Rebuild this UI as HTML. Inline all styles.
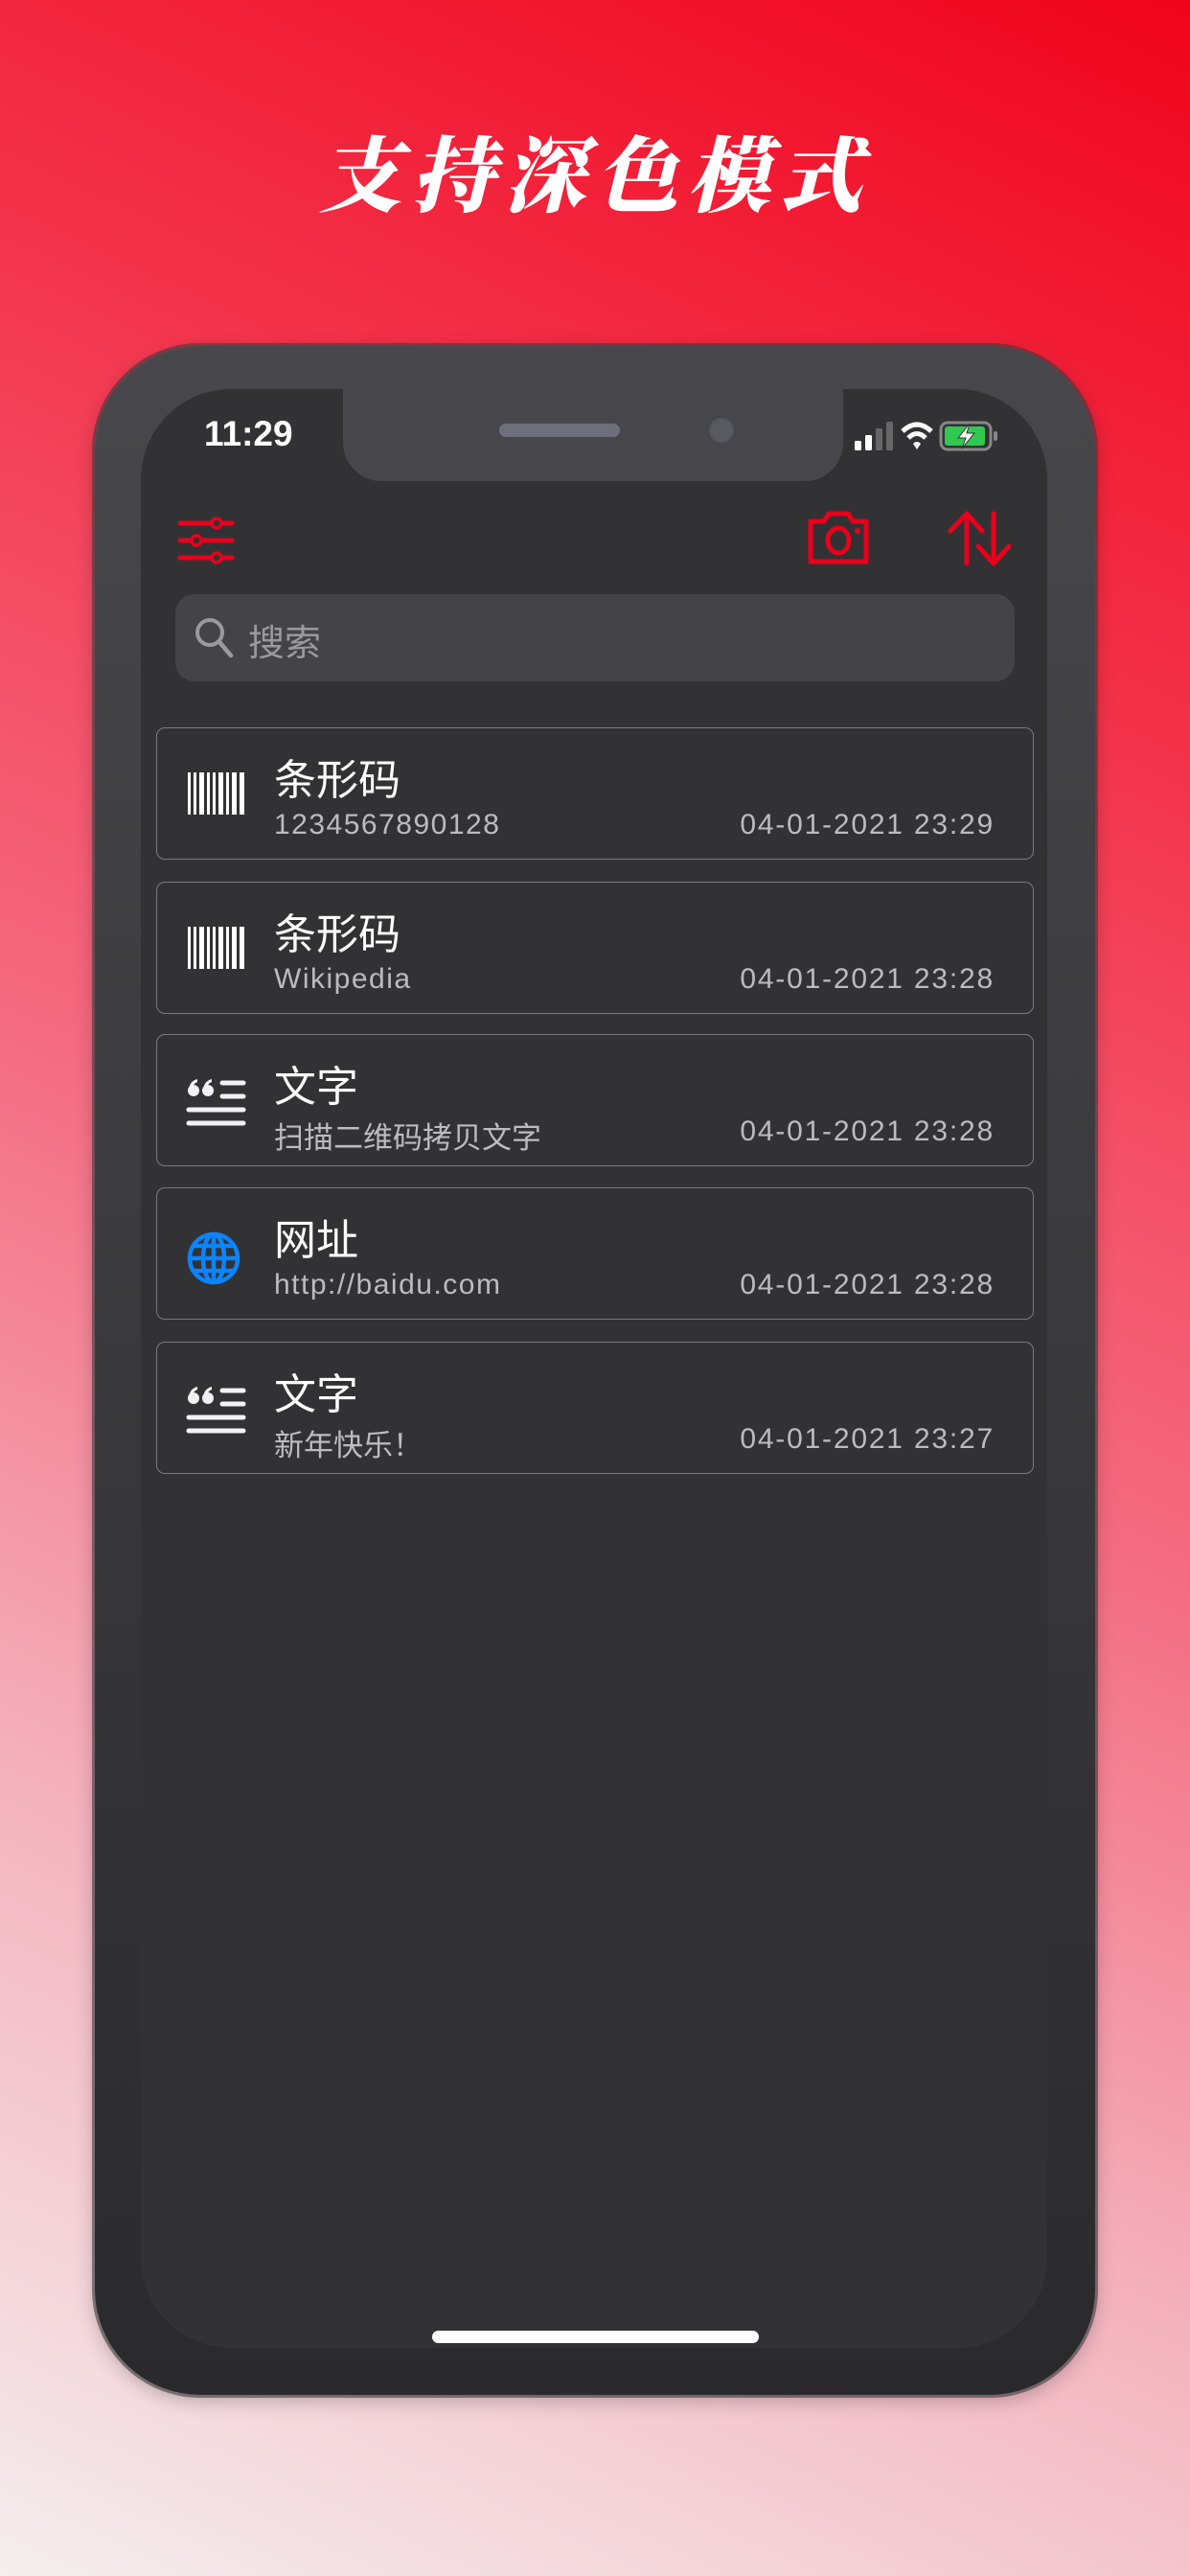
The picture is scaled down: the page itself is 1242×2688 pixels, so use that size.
<!DOCTYPE html>
<html><head><meta charset="utf-8">
<style>
*{margin:0;padding:0;box-sizing:border-box}
html,body{width:1242px;height:2688px;overflow:hidden}
body{position:relative;font-family:"Liberation Sans","Noto Sans CJK SC",sans-serif;
background:linear-gradient(205deg,#f0041c 0%,#f3344c 25%,#f46a80 50%,#f4b4bf 75%,#f4eeee 100%);}
.title{position:absolute;left:0;width:1242px;top:122px;text-align:center;color:#fff;font-family:"Noto Serif CJK SC",serif;font-weight:900;font-size:86px;letter-spacing:10px;line-height:110px;font-style:italic}
.phone{position:absolute;left:99px;top:361px;width:1044px;height:2138px;border-radius:110px;background:linear-gradient(#48484c,#2a2a2c);box-shadow:0 0 0 3px rgba(60,60,64,.6),0 6px 20px rgba(0,0,0,.25)}
.screen{position:absolute;left:147px;top:406px;width:946px;height:2044px;border-radius:94px;background:#323234;overflow:hidden}
.notch{position:absolute;left:211px;top:0;width:522px;height:96px;background:#47474b;border-radius:0 0 40px 40px}
.spk{position:absolute;left:163px;top:36px;width:126px;height:14px;border-radius:7px;background:#6e6f7a}
.cam{position:absolute;left:380px;top:28px;width:30px;height:30px;border-radius:50%;background:#5a5a62;box-shadow:inset 0 0 4px #222}
.time{position:absolute;left:66px;top:26px;font-size:37px;font-weight:bold;color:#fff}
.search{position:absolute;left:36px;top:214px;width:876px;height:91px;background:#444447;border-radius:20px}
.search span{position:absolute;left:76px;top:20px;font-size:38px;color:#9a9a9e}
.card{position:absolute;left:16px;width:916px;height:138px;border:1.5px solid #7b7b7e;border-radius:9px}
.card .t{position:absolute;left:122px;top:18px;font-size:44px;color:#fff}
.card .s{position:absolute;left:122px;top:84px;font-size:30px;color:#bcbcbe;letter-spacing:1.5px}
.card .s.c{font-size:31px;letter-spacing:0;top:82px}
.card .d{position:absolute;right:40px;top:84px;font-size:30px;color:#bcbcbe;letter-spacing:1.8px}
.card svg{position:absolute;left:30px;top:44px}
.home{position:absolute;left:304px;top:2026px;width:341px;height:13px;border-radius:7px;background:#fff}
</style></head><body>
<div class="title">支持深色模式</div>
<div class="phone"></div>
<div class="screen">
 <div class="notch"><div class="spk"></div><div class="cam"></div></div>
 <div class="time">11:29</div>
 <svg style="position:absolute;left:745px;top:32px" width="180" height="40" viewBox="0 0 180 40">
  <rect x="0" y="22" width="7" height="10" rx="1.5" fill="#fff"/><rect x="11" y="16" width="7" height="16" rx="1.5" fill="#fff"/><rect x="22" y="9" width="7" height="23" rx="1.5" fill="#666"/><rect x="33" y="2" width="7" height="30" rx="1.5" fill="#666"/>
  <path d="M50 12 Q65 -2 80 12" stroke="#fff" stroke-width="5" fill="none"/><path d="M56 19 Q65 10 74 19" stroke="#fff" stroke-width="5" fill="none"/><path d="M61 25 L65 31 L69 25 Q65 21 61 25Z" fill="#fff"/>
  <rect x="90" y="3" width="52" height="28" rx="7" fill="none" stroke="#888" stroke-width="3"/><rect x="94" y="7" width="42" height="20" rx="3" fill="#31c84f"/><rect x="145" y="12" width="4" height="10" rx="2" fill="#888"/>
  <path d="M120 4 L108 19 L116 19 L112 30 L125 14 L117 14Z" fill="#fff" stroke="#333" stroke-width="1"/>
 </svg>
 <svg style="position:absolute;left:38px;top:132px" width="60" height="54" viewBox="0 0 60 54">
  <g stroke="#e8001c" stroke-width="5" fill="none" stroke-linecap="round"><line x1="3" y1="8" x2="57" y2="8"/><line x1="3" y1="26" x2="57" y2="26"/><line x1="3" y1="44" x2="57" y2="44"/></g>
  <g fill="#323234" stroke="#e8001c" stroke-width="3.5"><circle cx="41" cy="8" r="5"/><circle cx="20" cy="26" r="5"/><circle cx="41" cy="44" r="5"/></g>
 </svg>
 <svg style="position:absolute;left:693px;top:126px" width="70" height="58" viewBox="0 0 70 58">
  <path d="M6 12 H20 L25 4 H45 L50 12 H64 V54 H6Z" fill="none" stroke="#e8001c" stroke-width="5" stroke-linejoin="round"/>
  <ellipse cx="35" cy="32" rx="11" ry="13" fill="none" stroke="#e8001c" stroke-width="5"/><circle cx="55" cy="22" r="3" fill="#e8001c"/>
 </svg>
 <svg style="position:absolute;left:840px;top:126px" width="72" height="60" viewBox="0 0 72 60">
  <g stroke="#e8001c" stroke-width="5" fill="none" stroke-linecap="round" stroke-linejoin="round"><path d="M22 56 V4 M5 22 L22 4 L38 22"/><path d="M50 4 V56 M34 38 L50 56 L66 38"/></g>
 </svg>
 <div class="search">
  <svg style="position:absolute;left:18px;top:22px" width="46" height="46" viewBox="0 0 46 46"><circle cx="18" cy="18" r="13" fill="none" stroke="#9a9a9e" stroke-width="4"/><line x1="28" y1="28" x2="40" y2="42" stroke="#9a9a9e" stroke-width="4.5" stroke-linecap="round"/></svg>
  <span>搜索</span>
 </div>
 <div class="card" style="top:353px">
  <svg width="64" height="48" viewBox="0 0 64 48" fill="#fff"><rect x="2" y="2" width="3" height="44"/><rect x="8" y="2" width="3" height="44"/><rect x="14" y="2" width="5" height="44"/><rect x="22" y="2" width="3" height="44"/><rect x="28" y="2" width="3" height="44"/><rect x="34" y="2" width="5" height="44"/><rect x="42" y="2" width="3" height="44"/><rect x="48" y="2" width="5" height="44"/><rect x="56" y="2" width="5" height="44"/></svg>
  <div class="t">条形码</div><div class="s">1234567890128</div><div class="d">04-01-2021 23:29</div>
 </div>
 <div class="card" style="top:514px">
  <svg width="64" height="48" viewBox="0 0 64 48" fill="#fff"><rect x="2" y="2" width="3" height="44"/><rect x="8" y="2" width="3" height="44"/><rect x="14" y="2" width="5" height="44"/><rect x="22" y="2" width="3" height="44"/><rect x="28" y="2" width="3" height="44"/><rect x="34" y="2" width="5" height="44"/><rect x="42" y="2" width="3" height="44"/><rect x="48" y="2" width="5" height="44"/><rect x="56" y="2" width="5" height="44"/></svg>
  <div class="t">条形码</div><div class="s">Wikipedia</div><div class="d">04-01-2021 23:28</div>
 </div>
 <div class="card" style="top:673px">
  <svg width="64" height="56" viewBox="0 0 64 56"><g fill="#f2f2f4"><circle cx="8" cy="14" r="6"/><circle cx="23" cy="14" r="6"/><path d="M3 13 Q4 4 12 2 L12 5 Q7 7 7 13Z"/><path d="M18 13 Q19 4 27 2 L27 5 Q22 7 22 13Z"/></g><g stroke="#f2f2f4" stroke-width="5" stroke-linecap="round"><line x1="38" y1="6" x2="60" y2="6"/><line x1="38" y1="20" x2="60" y2="20"/><line x1="3" y1="34" x2="60" y2="34"/><line x1="3" y1="48" x2="60" y2="48"/></g></svg>
  <div class="t">文字</div><div class="s c">扫描二维码拷贝文字</div><div class="d">04-01-2021 23:28</div>
 </div>
 <div class="card" style="top:833px">
  <svg width="58" height="58" viewBox="0 0 58 58"><g fill="none" stroke="#0a84ff" stroke-width="4.5"><circle cx="29" cy="29" r="25"/><ellipse cx="29" cy="29" rx="11" ry="25"/><line x1="29" y1="4" x2="29" y2="54"/><line x1="4" y1="29" x2="54" y2="29"/><path d="M9 16 H49 M9 42 H49"/></g></svg>
  <div class="t">网址</div><div class="s">http://baidu.com</div><div class="d">04-01-2021 23:28</div>
 </div>
 <div class="card" style="top:994px">
  <svg width="64" height="56" viewBox="0 0 64 56"><g fill="#f2f2f4"><circle cx="8" cy="14" r="6"/><circle cx="23" cy="14" r="6"/><path d="M3 13 Q4 4 12 2 L12 5 Q7 7 7 13Z"/><path d="M18 13 Q19 4 27 2 L27 5 Q22 7 22 13Z"/></g><g stroke="#f2f2f4" stroke-width="5" stroke-linecap="round"><line x1="38" y1="6" x2="60" y2="6"/><line x1="38" y1="20" x2="60" y2="20"/><line x1="3" y1="34" x2="60" y2="34"/><line x1="3" y1="48" x2="60" y2="48"/></g></svg>
  <div class="t">文字</div><div class="s c">新年快乐！</div><div class="d">04-01-2021 23:27</div>
 </div>
 <div class="home"></div>
</div>
</body></html>
